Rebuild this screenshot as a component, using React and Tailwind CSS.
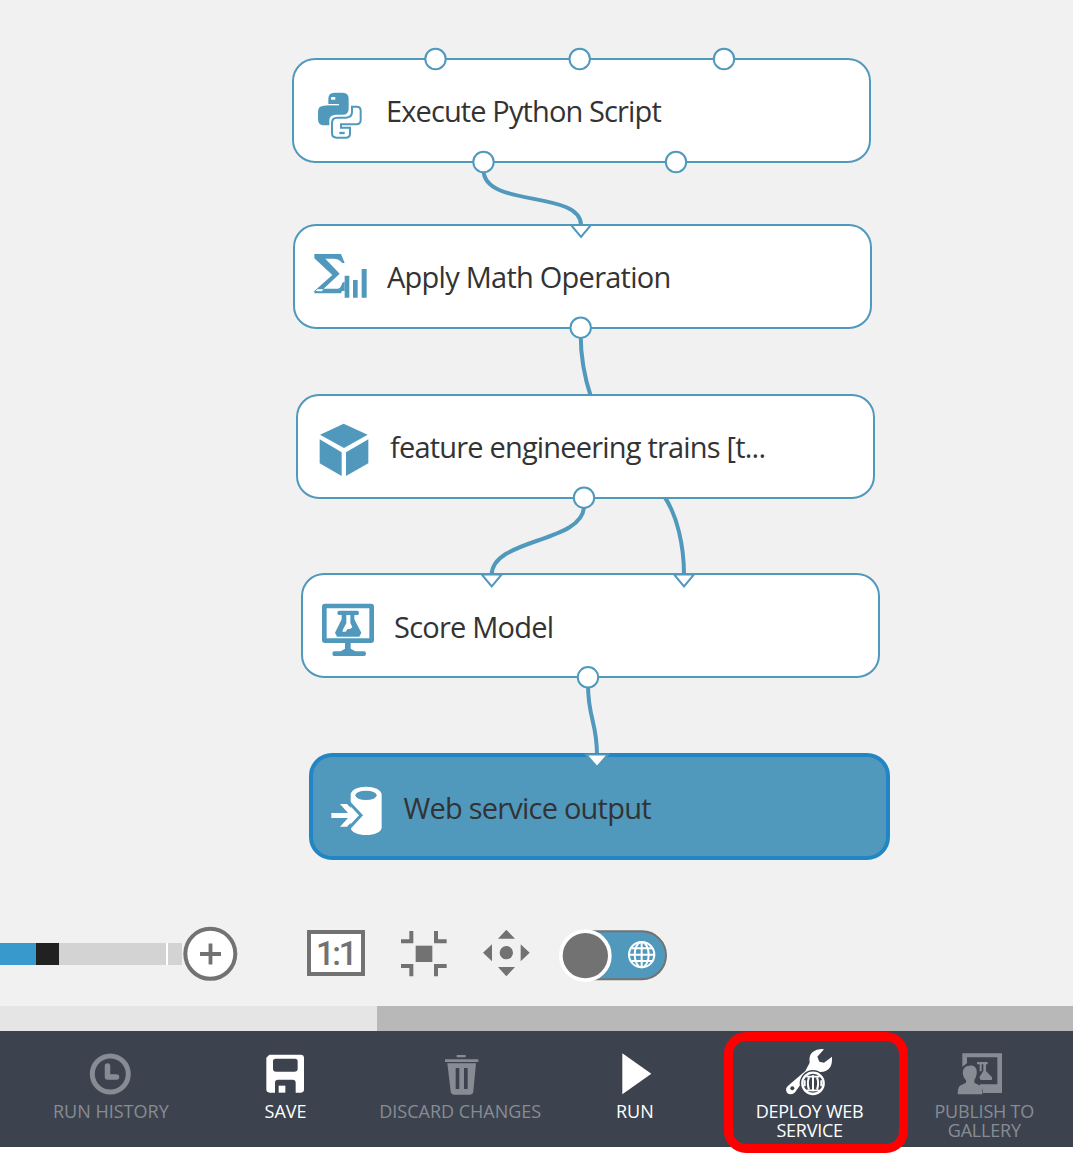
import React from "react";

const BLUE = "#5099bd";

function PythonIcon() {
  return (
    <svg width="50" height="50" viewBox="105 150 150 150" className="absolute left-[21px] top-[30px]">
      <path d="M145 196V176Q145 158 163 158H188Q206 158 206 176V206Q206 224 188 224H168Q148 225 148 240V256H132Q114 256 114 238V215Q114 197 132 197Z" fill={BLUE} />
      <path d="M143 194H177" stroke="#fff" strokeWidth="4" />
      <rect x="153" y="171" width="13" height="8" rx="2" fill="#fff" />
      <path d="M216 200H230Q242 200 242 212V240Q242 253 229 253H183V263H210V281Q210 293 197 293H170Q156 293 156 280V249Q156 233 172 233H198Q216 232 216 216Z" fill="#fff" stroke={BLUE} strokeWidth="6" />
      <path d="M178 279H194" stroke={BLUE} strokeWidth="7" />
    </svg>
  );
}

function MathIcon() {
  return (
    <svg width="56" height="50" viewBox="100 108 168 150" className="absolute left-[18px] top-[25px]">
      <path d="M104 117H184L195 144H188Q179 131 160 131H137L180 176L132 221H174Q184 219 188 203L195 200V228H187L184 235H104V228L158 180L104 130Z" fill={BLUE} />
      <path d="M108 228L113 223H132L126 229Z" fill="#fff" />
      <path d="M195 182H209V248H195ZM220 195H234V248H220ZM246 162H261V248H246Z" fill={BLUE} />
    </svg>
  );
}

function CubeIcon() {
  return (
    <svg width="52" height="56" viewBox="114 112 156 168" className="absolute left-[20px] top-[26px]">
      <path d="M191 117L263 150L192 190L120 150ZM119 164L185 203V274L119 236ZM265 164L198 203V274L265 236Z" fill={BLUE} />
    </svg>
  );
}

function MonitorIcon() {
  return (
    <svg width="56" height="56" viewBox="120 126 168 168" className="absolute left-[17px] top-[27px]">
      <rect x="133" y="138" width="142" height="104" rx="2" fill="#fff" stroke={BLUE} strokeWidth="14" />
      <path d="M178 152H231Q237 152 237 158Q237 165 229 165H223V178L244 218L238 230H171L165 218L185 178V165H180Q172 165 172 158Q172 152 178 152Z" fill={BLUE} />
      <path d="M199 165H211V188L217 202L210 207H203L197 215H187L190 206L199 190Z" fill="#fff" />
      <path d="M195 247H212V266L226 274H252Q258 274 258 281Q258 288 252 288H163Q157 288 157 281Q157 274 163 274H182L195 266Z" fill={BLUE} />
    </svg>
  );
}

function OutputIcon() {
  return (
    <svg width="56" height="54" viewBox="116 132 168 162" className="absolute left-[16px] top-[27px]">
      <path d="M181 165C181 132 274 132 274 165V262C274 293 181 293 181 262Z" fill="#fff" />
      <ellipse cx="227" cy="166" rx="32" ry="14" fill={BLUE} />
      <path d="M174 185L212 226L174 267" fill="none" stroke={BLUE} strokeWidth="9" />
      <path d="M123 219H173L149 192H170L202 226L170 260H149L173 234H123Z" fill="#fff" />
    </svg>
  );
}

const nodes = [
  { label: "Execute Python Script", Icon: PythonIcon, box: "left-[292px] top-[58px]", text: "tracking-[-0.88px]" },
  { label: "Apply Math Operation", Icon: MathIcon, box: "left-[293px] top-[224px]", text: "tracking-[-0.75px]" },
  { label: "feature engineering trains [t...", Icon: CubeIcon, box: "left-[296px] top-[394px]", text: "tracking-[-0.81px]" },
  { label: "Score Model", Icon: MonitorIcon, box: "left-[301px] top-[573px]", text: "-ml-px mt-[2px] tracking-[-0.77px]" },
];

const ports = [[435.5, 59], [579.7, 59], [724, 59], [483.5, 162], [676, 162], [580.7, 327.7], [584, 497.7], [588, 677.3]];
const inlets = [[581, 225], [491.7, 574.5], [684, 574.5]];

function Diagram() {
  return (
    <div className="relative h-[915px] shrink-0">
      <svg width="1073" height="915" className="absolute inset-0" fill="none" stroke={BLUE} strokeWidth="4">
        <path d="M483.5 170C483.5 208 581 190 581 225" />
        <path d="M580.7 335C580.7 358 584 376 591 397" />
        <path d="M664 496C677 515 684 545 684 575" />
        <path d="M584 506C584 543 491.7 538 491.7 575" />
        <path d="M588 685C588 718 597 722 597 755" />
      </svg>
      {nodes.map(({ label, Icon, box, text }) => (
        <div key={label} className={`absolute flex h-[105px] w-[579px] items-center rounded-[23px] border-2 border-[#5099bd] bg-white pl-[92px] ${box}`}>
          <Icon />
          <span className={`whitespace-nowrap text-[29px] text-[#333] ${text}`}>{label}</span>
        </div>
      ))}
      <div className="absolute left-[308.5px] top-[753px] flex h-[107px] w-[581px] items-center rounded-[23px] border-4 border-[#2186c3] bg-[#5099bd] pl-[91px]">
        <OutputIcon />
        <span className="mt-[2px] whitespace-nowrap text-[29px] tracking-[-0.78px] text-[#333]">Web service output</span>
      </div>
      <svg width="1073" height="915" className="absolute inset-0" fill="#fff" stroke={BLUE} strokeWidth="2">
        {ports.map(([x, y]) => <circle key={`${x}-${y}`} cx={x} cy={y} r="10.2" />)}
        {inlets.map(([x, y]) => <path key={`${x}-${y}`} d={`M${x - 10} ${y}H${x + 10}L${x} ${y + 12}Z`} />)}
        <path d="M586 754.5H608L597 767Z" />
      </svg>
    </div>
  );
}

function Controls() {
  return (
    <div className="flex h-[91px] shrink-0 items-start">
      <div className="mt-[28px] flex h-[22px] w-[182px]">
        <div className="w-9 bg-[#3799cc]" />
        <div className="w-[23px] bg-[#212121]" />
        <div className="w-[107px] bg-[#d3d3d3]" />
        <div className="w-[2px] bg-white" />
        <div className="w-[14px] bg-[#d3d3d3]" />
      </div>
      <svg width="56" height="56" viewBox="0 0 56 56" className="mt-[11px]">
        <circle cx="28.3" cy="27.8" r="25" fill="#fff" stroke="#727272" strokeWidth="4" />
        <path d="M18 28H39M28.5 17.5V38.5" stroke="#727272" strokeWidth="3.8" />
      </svg>
      <div className="ml-[69px] mt-[15px] flex h-[46px] w-[58px] items-center justify-center border-4 border-[#727272] bg-white">
        <span className="-ml-[1px] font-['Roboto'] text-[33px] font-medium leading-none tracking-[-2.4px] text-[#727272]">1:1</span>
      </div>
      <svg width="46" height="46" viewBox="64 48 138 138" className="ml-[36px] mt-4" fill="none" stroke="#727272">
        <path d="M95 48V79H64M169 48V79H201M95 184V153H64M169 184V153H201" strokeWidth="12" />
        <rect x="108" y="92" width="50" height="49" fill="#727272" stroke="none" />
      </svg>
      <svg width="48" height="48" viewBox="306 43 144 144" className="ml-[35px] mt-[14px]" fill="#727272">
        <path d="M354 72L379 45L405 72ZM354 157H405L379 185ZM336 89V140L309 114ZM422 89V140L449 114Z" />
        <circle cx="379" cy="114" r="20" />
      </svg>
      <svg width="108" height="56" viewBox="537 38 324 168" className="ml-[29px] mt-[13px]">
        <rect x="570" y="48" width="288" height="144" rx="72" fill={BLUE} stroke="#727272" strokeWidth="6" />
        <circle cx="616" cy="121" r="75" fill="#fff" stroke="#fff" strokeWidth="8" />
        <circle cx="616" cy="121" r="68" fill="#727272" />
        <g fill="none" stroke="#fff" strokeWidth="6">
          <circle cx="785" cy="118" r="38" />
          <ellipse cx="785" cy="118" rx="21" ry="38" />
          <path d="M785 80V156M748 118H822M754 99H816M754 137H816" />
        </g>
      </svg>
    </div>
  );
}

const G = "#878c94";

const HistoryIcon = () => (
  <svg width="44" height="44" viewBox="0 0 44 44" fill="none" stroke={G}>
    <circle cx="21.3" cy="22" r="18" strokeWidth="5" />
    <path d="M18.5 14V25H27.5" strokeWidth="5.5" strokeLinecap="round" strokeLinejoin="round" />
  </svg>
);

const SaveIcon = () => (
  <svg width="44" height="44" viewBox="792 66 132 132">
    <path fill="#fff" fillRule="evenodd" d="M808 74H902Q912 74 912 84V178Q912 188 903 188H887V158Q887 149 878 149H834Q825 149 825 158V188H809Q799 188 799 178V83ZM827 86Q819 86 819 94V116Q819 125 828 125H883Q893 125 893 116V94Q893 86 885 86Z" />
    <rect x="836" y="167" width="20" height="21" fill="#fff" />
  </svg>
);

const TrashIcon = () => (
  <svg width="44" height="44" viewBox="235 66 132 132">
    <path fill={G} fillRule="evenodd" d="M291 75H318V82H291ZM256 88H356V96H256ZM263 100H349L341 184Q340 194 331 194H283Q274 194 273 184ZM288 114V177H299V114ZM313 114V177H324V114Z" />
  </svg>
);

const RunIcon = () => (
  <svg width="44" height="44" viewBox="760 66 132 132">
    <path d="M788 70L875 131L788 193Z" fill="#fff" />
  </svg>
);

const DeployIcon = () => (
  <svg width="50" height="48" viewBox="210 68 150 144">
    <path d="M327 72Q308 69 293 80Q280 91 284 112L271 137L221 180Q208 190 216 202Q225 211 239 202L271 158L312 140Q336 141 346 125Q352 114 351 94L327 112L313 109L307 94Z" fill="#fff" />
    <circle cx="232" cy="189" r="6" fill="#3d434e" />
    <circle cx="294" cy="174" r="40" fill="#3d434e" />
    <g fill="none" stroke="#fff">
      <circle cx="294" cy="174" r="32" strokeWidth="7" />
      <path d="M294 150V198M282 156Q275 174 282 192M306 156Q313 174 306 192M269 165V183M319 165V183" strokeWidth="6" />
      <path d="M274 154H314M274 195H314" strokeWidth="5" />
    </g>
  </svg>
);

const PublishIcon = () => (
  <svg width="46" height="44" viewBox="739 81 138 132" fill={G}>
    <path d="M743 85H862V204H804V194L796 186V178H848V97H757V115L743 125Z" />
    <path d="M787 111H819V118H814V138L832 157V165H798L794 157L806 138V118H801V139H795V118H787Z" />
    <path d="M765 122C793 119 789 153 779 165V173L797 182Q803 187 803 208H729Q729 187 736 182L754 173V165C741 153 739 123 765 122Z" />
  </svg>
);

const actions = [
  { label: "RUN HISTORY", Icon: HistoryIcon, tone: "text-[#878c94] tracking-[0px]" },
  { label: "SAVE", Icon: SaveIcon, tone: "text-white tracking-[0px]" },
  { label: "DISCARD CHANGES", Icon: TrashIcon, tone: "text-[#878c94] tracking-[0px]" },
  { label: "RUN", Icon: RunIcon, tone: "text-white tracking-[0px]" },
  { label: "DEPLOY WEB\nSERVICE", Icon: DeployIcon, tone: "text-white tracking-[-0.25px]", marked: true },
  { label: "PUBLISH TO\nGALLERY", Icon: PublishIcon, tone: "text-[#878c94] tracking-[-0.2px]" },
];

function Toolbar() {
  return (
    <div className="flex h-[116px] shrink-0 bg-[#3d434e] pl-[23.5px]">
      {actions.map(({ label, Icon, tone, marked }) => (
        <div key={label} className={`relative flex w-[174.7px] shrink-0 flex-col items-center ${tone}`}>
          <div className="flex h-[71px] items-end overflow-visible pb-[6px] [&>svg]:overflow-visible"><Icon /></div>
          <div className="whitespace-pre text-center text-[18px] leading-[19px]">{label}</div>
          {marked && <div className="absolute left-[1.5px] top-[1px] h-[121px] w-[184px] rounded-[22px] border-[9px] border-[#fe0000]" />}
        </div>
      ))}
    </div>
  );
}

export default function App() {
  return (
    <div className="flex h-[1153px] w-[1073px] flex-col overflow-hidden bg-white font-['Open_Sans','Noto_Sans',sans-serif]">
      <div className="flex h-[1006px] shrink-0 flex-col bg-[#f1f1f1]">
        <Diagram />
        <Controls />
      </div>
      <div className="flex h-[25px] shrink-0 bg-[#e5e5e5]">
        <div className="ml-[377px] flex-1 bg-[#b8b8b8]" />
      </div>
      <Toolbar />
    </div>
  );
}
